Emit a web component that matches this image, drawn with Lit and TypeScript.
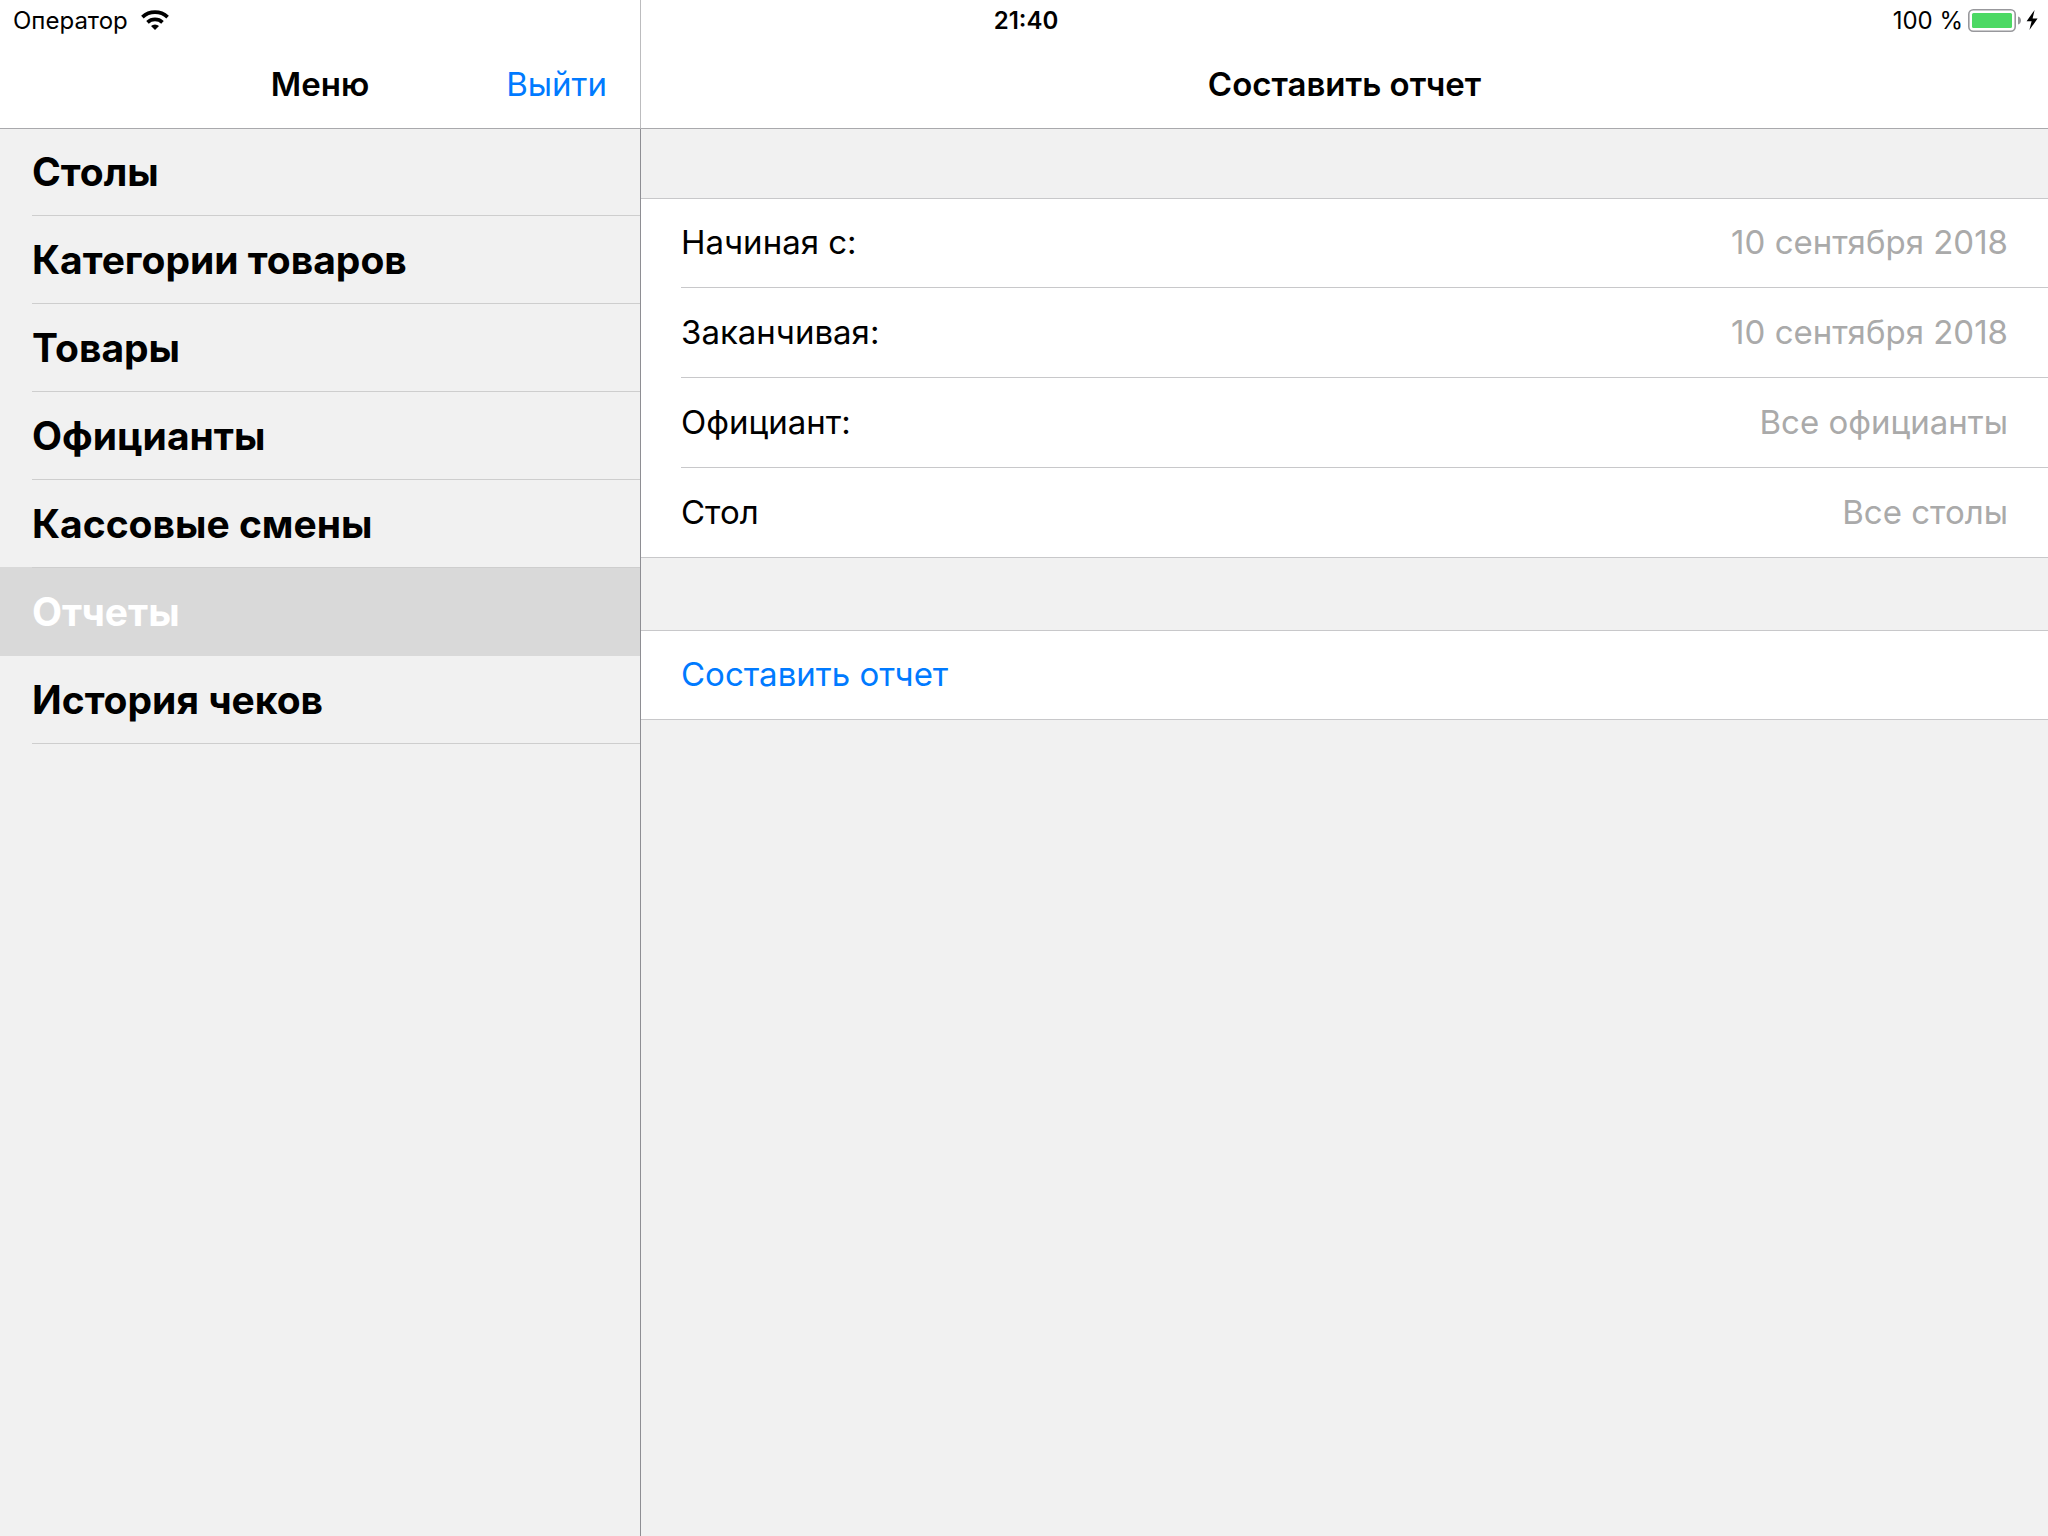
import { LitElement, html, css, svg } from "lit";
import { customElement, state } from "lit/decorators.js";
import { classMap } from "lit/directives/class-map.js";

const MENU = [
  { id: "tables", title: "Столы" },
  { id: "categories", title: "Категории товаров" },
  { id: "goods", title: "Товары" },
  { id: "waiters", title: "Официанты" },
  { id: "shifts", title: "Кассовые смены" },
  { id: "reports", title: "Отчеты" },
  { id: "history", title: "История чеков" },
];

@customElement("status-bar")
export class StatusBar extends LitElement {
  static styles = css`
    :host {
      display: grid;
      grid-template-columns: 1fr auto 1fr;
      align-items: center;
      height: 40px;
      padding: 0 9px 0 13px;
      font-size: 24px;
      line-height: 32px;
      color: #000;
    }
    .side {
      display: flex;
      align-items: center;
      gap: 13px;
    }
    .power {
      justify-content: flex-end;
      gap: 5px;
    }
    span {
      padding-top: 2px;
    }
    .time {
      font-weight: 600;
    }
    svg {
      display: block;
    }
  `;

  render() {
    return html`
      <div class="side">
        <span>Оператор</span>
        <svg width="28" height="20" viewBox="0 0 28 20" aria-label="Wi-Fi">
          ${svg`
            <path d="M14 20 L10 16 A5.8 5.8 0 0 1 18 16 Z" fill="#000" />
            <path d="M6.5 12.4 A11 11 0 0 1 21.5 12.4" fill="none" stroke="#000" stroke-width="3.7" />
            <path d="M1.4 7.2 A18.4 18.4 0 0 1 26.6 7.2" fill="none" stroke="#000" stroke-width="3.7" />
          `}
        </svg>
      </div>
      <span class="time">21:40</span>
      <div class="side power">
        <span>100 %</span>
        <svg width="71" height="24" viewBox="0 0 71 24" aria-label="Аккумулятор заряжается">
          ${svg`
            <rect x="0.8" y="1.8" width="46.4" height="21.4" rx="4.5" fill="#fff" stroke="#98989c" stroke-width="1.6" />
            <rect x="4" y="5" width="40" height="15" rx="1.5" fill="#4cd964" />
            <path d="M50 8.5 C54 9.5 54 15.5 50 16.5 Z" fill="#98989c" />
            <path d="M66.6 2 L58.6 13.2 H63.6 L61.4 22 L69.6 10.6 H64.6 Z" fill="#000" />
          `}
        </svg>
      </div>
    `;
  }
}

@customElement("app-root")
export class AppRoot extends LitElement {
  @state() private active = "reports";

  static styles = css`
    :host {
      display: grid;
      grid-template-columns: 641px 1fr;
      grid-template-rows: 40px 1fr;
      min-height: 100vh;
      background: #f1f1f1;
      color: #000;
      font-family: Inter, "Liberation Sans", sans-serif;
      font-size: 33px;
      line-height: 40px;
    }
    * {
      box-sizing: border-box;
    }
    status-bar {
      grid-area: 1 / 1 / 2 / 3;
      z-index: 1;
    }
    .pane {
      display: flex;
      flex-direction: column;
    }
    .master {
      grid-area: 1 / 1 / 3 / 2;
    }
    .detail {
      grid-area: 1 / 2 / 3 / 3;
    }
    .bar {
      display: grid;
      grid-template-columns: 1fr auto 1fr;
      align-items: center;
      height: 129px;
      padding: 40px 33px 0;
      background: #fff;
      border-bottom: 1px solid #a9a9ac;
    }
    .master .bar {
      border-right: 1px solid #bcbcbe;
    }
    h1 {
      grid-column: 2;
      margin: 0;
      font-size: inherit;
      font-weight: 600;
    }
    button,
    input,
    select {
      margin: 0;
      padding: 0;
      border: 0;
      background: none;
      font: inherit;
      appearance: none;
    }
    button {
      color: #007aff;
      cursor: pointer;
    }
    .exit {
      justify-self: end;
    }
    nav {
      flex: 1;
      border-right: 1px solid #8e8e93;
    }
    ul {
      margin: -1px 0 0;
      padding: 0;
      list-style: none;
    }
    .item {
      display: flex;
      height: 88px;
      padding-left: 32px;
      color: inherit;
      font-size: 39px;
      font-weight: 700;
      text-decoration: none;
    }
    .item span {
      flex: 1;
      display: flex;
      align-items: center;
      border-bottom: 1px solid #cecece;
    }
    .selected {
      height: 89px;
      margin-top: -1px;
      padding-top: 1px;
      background: #d9d9d9;
      color: #fff;
    }
    .selected span {
      border-color: transparent;
    }
    form {
      display: flex;
      flex-direction: column;
      gap: 72px;
      padding-top: 69px;
    }
    .group {
      background: #fff;
      border: solid #c8c8ca;
      border-width: 1px 0;
    }
    .row {
      display: flex;
      align-items: center;
      height: 90px;
      margin-left: 40px;
      padding: 0 40px 2px 0;
      border-bottom: 1px solid #c8c8ca;
    }
    .row:first-child {
      height: 89px;
    }
    .row:last-child {
      margin-bottom: -1px;
      border-color: transparent;
    }
    .value {
      flex: 1;
      min-width: 0;
      height: 80px;
      color: #aaa;
      text-align: right;
      text-align-last: right;
      opacity: 1;
    }
    .submit {
      flex: 1;
      height: 80px;
      text-align: left;
    }
  `;

  private select(e: Event, id: string) {
    e.preventDefault();
    this.active = id;
  }

  render() {
    return html`
      <status-bar></status-bar>
      <section class="pane master">
        <header class="bar">
          <h1>Меню</h1>
          <button class="exit" type="button">Выйти</button>
        </header>
        <nav>
          <ul>
            ${MENU.map(
              (m) => html`<li>
                <a
                  class=${classMap({ item: true, selected: m.id === this.active })}
                  href="#${m.id}"
                  @click=${(e: Event) => this.select(e, m.id)}
                  ><span>${m.title}</span></a
                >
              </li>`
            )}
          </ul>
        </nav>
      </section>
      <main class="pane detail">
        <header class="bar"><h1>Составить отчет</h1></header>
        <form @submit=${(e: Event) => e.preventDefault()}>
          <div class="group">
            <div class="row">
              <label for="from">Начиная с:</label>
              <input class="value" id="from" type="text" readonly value="10 сентября 2018" />
            </div>
            <div class="row">
              <label for="to">Заканчивая:</label>
              <input class="value" id="to" type="text" readonly value="10 сентября 2018" />
            </div>
            <div class="row">
              <label for="waiter">Официант:</label>
              <select class="value" id="waiter">
                <option>Все официанты</option>
              </select>
            </div>
            <div class="row">
              <label for="table">Стол</label>
              <select class="value" id="table">
                <option>Все столы</option>
              </select>
            </div>
          </div>
          <div class="group">
            <div class="row"><button class="submit" type="submit">Составить отчет</button></div>
          </div>
        </form>
      </main>
    `;
  }
}
